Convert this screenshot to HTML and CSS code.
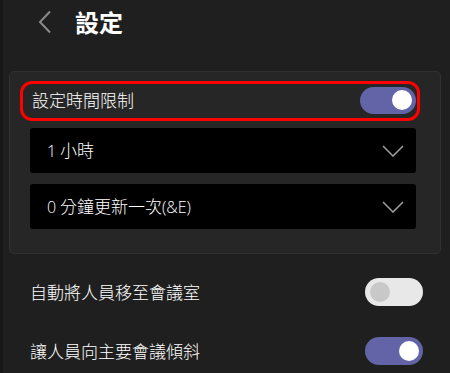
FILE: index.html
```html
<!DOCTYPE html>
<html lang="zh-Hant">
<head>
<meta charset="utf-8">
<link rel="stylesheet" href="styles.css">
</head>
<body>
<div class="page">
  <header class="header">
    <svg class="back" width="14" height="24" viewBox="0 0 14 24"><path d="M12 1.5 L2 12 L12 22.5" fill="none" stroke="#8a8a8a" stroke-width="2"/></svg>
    <h1 class="title">設定</h1>
  </header>
  <section class="card">
    <div class="limit-row">
      <span class="label">設定時間限制</span>
      <span class="toggle on"><span class="knob"></span></span>
    </div>
    <div class="select first">
      <span class="select-text"><span class="num">1</span> 小時</span>
      <svg class="chev" width="22" height="12" viewBox="0 0 22 12"><path d="M1 1 L11 11 L21 1" fill="none" stroke="#9a9a9a" stroke-width="1.6"/></svg>
    </div>
    <div class="select second">
      <span class="select-text"><span class="num">0</span> 分鐘更新一次<span class="num">(&amp;E)</span></span>
      <svg class="chev" width="22" height="12" viewBox="0 0 22 12"><path d="M1 1 L11 11 L21 1" fill="none" stroke="#9a9a9a" stroke-width="1.6"/></svg>
    </div>
  </section>
  <div class="row">
    <span class="label">自動將人員移至會議室</span>
    <span class="toggle off"><span class="knob"></span></span>
  </div>
  <div class="row">
    <span class="label">讓人員向主要會議傾斜</span>
    <span class="toggle on"><span class="knob"></span></span>
  </div>
</div>
</body>
</html>
```
FILE: styles.css
```css
html, body {
  margin: 0;
  padding: 0;
  background: #1f1f1f;
}
body {
  width: 450px;
  height: 373px;
  overflow: hidden;
  font-family: "Noto Sans CJK TC", "Noto Sans", sans-serif;
  color: #ffffff;
}
.page {
  border-left: 3px solid #171717;
  height: 373px;
  box-sizing: border-box;
}
.header {
  display: flex;
  align-items: center;
  height: 44px;
  padding-left: 35px;
}
.back {
  display: block;
}
.title {
  margin: 0 0 0 23px;
  font-size: 24px;
  font-weight: 700;
  line-height: 28px;
}
.card {
  margin: 27px 9px 0 6px;
  height: 183px;
  box-sizing: border-box;
  background: #262626;
  border: 1px solid #313131;
  border-radius: 5px;
  padding: 9px 20px 0 10px;
}
.limit-row {
  display: flex;
  align-items: center;
  justify-content: space-between;
  height: 40px;
  box-sizing: border-box;
  border: 3px solid #ff0000;
  border-radius: 12px;
  padding: 0 1px 2px 9px;
}
.label {
  font-size: 17px;
  font-weight: 300;
  line-height: 24px;
  letter-spacing: 0;
}
.toggle {
  display: flex;
  align-items: center;
  width: 56px;
  height: 27px;
  border-radius: 14px;
  box-sizing: border-box;
  padding: 0 4px;
}
.toggle.on {
  background: #6264a7;
  justify-content: flex-end;
}
.toggle.off {
  background: #e8e8e8;
  justify-content: flex-start;
  width: 58px;
  height: 28px;
  padding: 0 5px;
}
.knob {
  width: 20px;
  height: 20px;
  border-radius: 50%;
  background: #ffffff;
}
.toggle.off .knob {
  background: #c8c8c8;
}
.select {
  display: flex;
  align-items: center;
  justify-content: space-between;
  margin-left: 10px;
  margin-right: 4px;
  height: 45px;
  background: #000000;
  border-radius: 3px;
  padding: 0 12px 0 17px;
}
.select.first {
  margin-top: 7px;
}
.select.second {
  margin-top: 11px;
}
.select-text {
  font-size: 17px;
  font-weight: 300;
  line-height: 24px;
}
.num {
  font-family: "Open Sans", "Liberation Sans", sans-serif;
  font-size: 16px;
}
.chev {
  display: block;
}
.row {
  display: flex;
  align-items: center;
  justify-content: space-between;
  height: 59px;
  padding: 0 27px 0 27px;
}
.row:first-of-type {
  margin-top: 8px;
}
.row .toggle.on {
  width: 58px;
  height: 28px;
}
```
